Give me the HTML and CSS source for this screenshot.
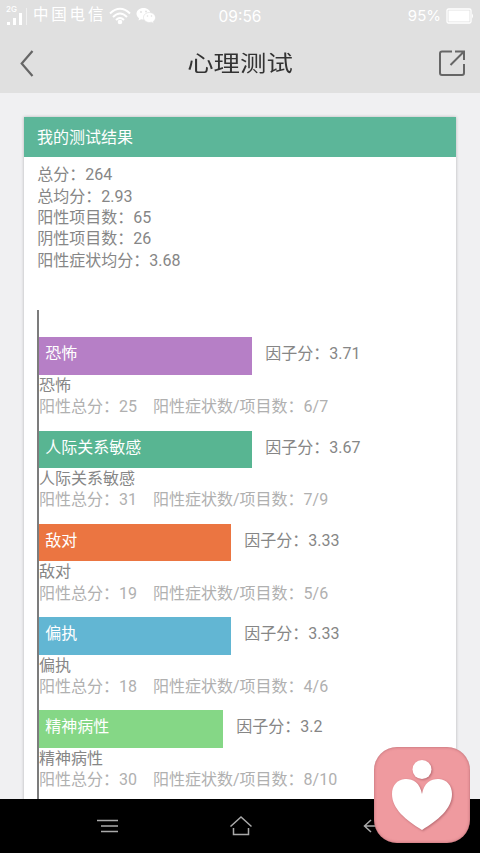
FILE: index.html
```
<!DOCTYPE html>
<html lang="zh-CN">
<head>
    <meta charset="UTF-8">
    <meta name="viewport" content="width=device-width, initial-scale=1.0">
    <title>心理测试</title>
    <link rel="stylesheet" href="styles.css">
</head>
<body>
<div class="screen">
    <!-- Status bar -->
    <div class="status">
        <div class="status-left">
            <div class="signal">
                <span class="network">2G</span>
                <svg width="22" height="13" viewBox="0 0 22 13" fill="#fff">
                    <rect x="1" y="10" width="3" height="3"/>
                    <rect x="7" y="6" width="3" height="7"/>
                    <rect x="13" y="1" width="3" height="12"/>
                    <rect x="20" y="-4" width="1" height="17" opacity=".5"/>
                </svg>
            </div>
            <span class="carrier">中国电信</span>
            <svg class="wifi" width="22" height="18" viewBox="0 0 22 18" fill="none" stroke="#fff" stroke-width="2">
                <path d="M1 6.5Q11-3 21 6.5M4 10Q11 3 18 10M7 13Q11 9 15 13"/>
                <circle cx="11" cy="15" r="2.3" fill="#fff" stroke="none"/>
            </svg>
            <svg class="wechat" width="20" height="17" viewBox="0 0 20 17">
                <path fill="#fff" d="M7.5 1C3.5 1 .5 3.6.5 6.8c0 1.8 1 3.4 2.5 4.5l-.5 2.3 2.7-1.4c.7.2 1.5.3 2.3.3 4 0 7-2.6 7-5.7S11.500 1 7.500 1z"/>
                <path fill="#fff" stroke="#e0e0e0" stroke-width=".7" d="M13.500 5.500C10 5.500 7.500 7.800 7.500 10.500s2.500 5 6 5c.7 0 1.300-.1 1.900-.3l2.400 1.300-.5-2c1.400-1 2.200-2.400 2.200-4 0-2.700-2.600-5-6-5z"/>
                <g fill="#e0e0e0">
                    <circle cx="5" cy="5" r=".9"/>
                    <circle cx="10" cy="4.500" r=".9"/>
                    <circle cx="11.500" cy="9" r=".8"/>
                    <circle cx="15.500" cy="9" r=".8"/>
                </g>
            </svg>
        </div>
        <span class="clock">09:56</span>
        <div class="status-right">
            <span class="percent">95%</span>
            <svg width="28" height="16" viewBox="0 0 28 16">
                <rect x="1" y="1" width="24" height="14" rx="1.500" fill="none" stroke="#fff" stroke-width="1.300"/>
                <rect x="2.500" y="2.500" width="21" height="11" fill="#fff"/>
                <path d="M26 5.500q2 2.500 0 5z" fill="#fff"/>
            </svg>
        </div>
    </div>

    <!-- Title bar -->
    <div class="navbar">
        <svg class="back" width="14" height="28" viewBox="0 0 14 28" fill="none" stroke="#666" stroke-width="2.200">
            <path d="M12.500 2L1.700 14.500L12.500 27"/>
        </svg>
        <h1>心理测试</h1>
        <svg class="share" width="28" height="28" viewBox="0 0 28 28" fill="none" stroke="#666" stroke-width="2">
            <path d="M14 2.500H4Q2 2.500 2 4.500V24Q2 26 4 26H24Q26 26 26 24V15M17 2.500H26V11M25.500 3L12.500 16"/>
        </svg>
    </div>

    <div class="content">
        <div class="card">
            <h2>我的测试结果</h2>
            <div class="summary">
                <p>总分：264</p>
                <p>总均分：2.93</p>
                <p>阳性项目数：65</p>
                <p>阴性项目数：26</p>
                <p>阳性症状均分：3.68</p>
            </div>

            <div class="chart">
                <div class="factor">
                    <div class="bar-row"><div class="bar purple">恐怖</div><span>因子分：3.71</span></div>
                    <p>恐怖</p>
                    <p class="detail"><span>阳性总分：25</span><span>阳性症状数/项目数：6/7</span></p>
                </div>
                <div class="factor">
                    <div class="bar-row"><div class="bar green">人际关系敏感</div><span>因子分：3.67</span></div>
                    <p>人际关系敏感</p>
                    <p class="detail"><span>阳性总分：31</span><span>阳性症状数/项目数：7/9</span></p>
                </div>
                <div class="factor">
                    <div class="bar-row"><div class="bar orange">敌对</div><span>因子分：3.33</span></div>
                    <p>敌对</p>
                    <p class="detail"><span>阳性总分：19</span><span>阳性症状数/项目数：5/6</span></p>
                </div>
                <div class="factor">
                    <div class="bar-row"><div class="bar blue">偏执</div><span>因子分：3.33</span></div>
                    <p>偏执</p>
                    <p class="detail"><span>阳性总分：18</span><span>阳性症状数/项目数：4/6</span></p>
                </div>
                <div class="factor">
                    <div class="bar-row"><div class="bar lime">精神病性</div><span>因子分：3.2</span></div>
                    <p>精神病性</p>
                    <p class="detail"><span>阳性总分：30</span><span>阳性症状数/项目数：8/10</span></p>
                </div>
            </div>
        </div>
    </div>

    <!-- System keys -->
    <div class="keys">
        <svg width="24" height="18" viewBox="0 0 24 18" stroke="#aaa" stroke-width="1.500">
            <path d="M1 3.500H22M5 9H22M5 14.500H22"/>
        </svg>
        <svg width="24" height="22" viewBox="0 0 24 22" fill="none" stroke="#aaa" stroke-width="1.500">
            <path d="M1.500 11.500L12 2L22.500 11.500M4.500 13V19.500H19.500V13"/>
        </svg>
        <svg width="24" height="18" viewBox="0 0 24 18" fill="none" stroke="#aaa" stroke-width="1.500">
            <path d="M9 3L2.500 9L9 15M2.500 9H23"/>
        </svg>
    </div>

    <!-- Floating app badge -->
    <div class="badge">
        <svg width="96" height="96" viewBox="0 0 96 96">
            <g class="heart" fill="#fff">
                <circle cx="48" cy="22.500" r="9.500"/>
                <path d="M48 47C46 35 38 31.500 31 32C23 32.500 18 39 18 47C18 62 32 73 48 83C64 73 78 62 78 47C78 39 73 32.500 65 32C58 31.500 50 35 48 47z"/>
            </g>
        </svg>
    </div>
</div>
</body>
</html>
```
FILE: styles.css
```
* {
    box-sizing: border-box;
}
body {
    margin: 0;
    font-family: Roboto, "Noto Sans CJK SC", sans-serif;
    font-size: 16px;
    line-height: 21.33px;
    color: #868686;
}
h1, h2, p {
    margin: 0;
    font-weight: normal;
}
svg {
    display: block;
    flex: none;
}
.screen {
    position: relative;
    display: flex;
    flex-direction: column;
    height: 853px;
    overflow: hidden;
    background: #f0f0f2;
}

/* Status bar */
.status {
    display: grid;
    grid-template-columns: 1fr auto 1fr;
    align-items: center;
    height: 32px;
    padding: 0 6px;
    background: #e0e0e0;
    color: #fff;
}
.status-left, .status-right {
    display: flex;
    align-items: center;
}
.status-right {
    justify-content: flex-end;
    gap: 5px;
}
.signal {
    width: 27px;
}
.signal svg {
    overflow: visible;
}
.network {
    display: block;
    font-family: Inter, sans-serif;
    font-size: 8px;
    font-weight: 500;
    line-height: 6px;
}
.carrier {
    width: 73px;
    font-size: 15.5px;
    letter-spacing: 2.8px;
    white-space: nowrap;
}
.wifi {
    margin-left: 3px;
}
.wechat {
    margin-left: 5px;
}
.clock, .percent {
    font-family: Inter, sans-serif;
    font-size: 15.5px;
    padding-top: 2px;
}
.percent {
    font-size: 15px;
    padding-top: 0;
}

/* Title bar */
.navbar {
    display: flex;
    align-items: center;
    justify-content: space-between;
    height: 61px;
    flex: none;
    padding: 0 14px 0 20px;
    background: #e0e0e0;
}
.navbar h1 {
    margin-left: 8px;
    padding-top: 2px;
    color: #333;
    font-size: 22px;
    line-height: 28px;
    transform: scaleX(1.2);
}

.content {
    height: 706px;
    flex: none;
    padding: 24px 24px 0;
    overflow: hidden;
}
.card {
    height: 760px;
    background: #fff;
    box-shadow: 0 0 3px rgba(0, 0, 0, .25);
}
.card h2 {
    height: 40px;
    padding-left: 13px;
    background: #5cb699;
    color: #fff;
    font-size: 16px;
    line-height: 42px;
}
.summary {
    padding: 7.3px 13.3px 0;
}

/* Factor chart */
.chart {
    height: 560px;
    margin: 39.3px 13px 0;
    padding-top: 27px;
    border-left: 2px solid #7c7c7c;
}
.factor {
    margin-bottom: 13.33px;
}
.bar-row {
    display: flex;
    gap: 13.3px;
    height: 37.33px;
    line-height: 33px;
}
.bar {
    padding-left: 6.3px;
    color: #fff;
}
.purple {
    width: 213px;
    background: #b67fc6;
}
.green {
    width: 213px;
    background: #58b592;
}
.orange {
    width: 192px;
    background: #eb7541;
}
.blue {
    width: 192px;
    background: #62b6d3;
}
.lime {
    width: 184px;
    background: #85d786;
}
.detail {
    display: flex;
    gap: 16px;
    color: #b0b0b0;
}

/* System keys */
.keys {
    display: flex;
    align-items: center;
    justify-content: center;
    gap: 109px;
    height: 54px;
    flex: none;
    padding-left: 1px;
    background: #000;
}

.badge {
    position: absolute;
    right: 10px;
    bottom: 10px;
    width: 96px;
    height: 96px;
    border-radius: 23px;
    background: #ef9a9f;
    box-shadow: inset 0 0 3px rgba(120, 50, 60, .5);
}
.heart {
    filter: drop-shadow(1px 1px 1px rgba(130, 60, 70, .5));
}
```
